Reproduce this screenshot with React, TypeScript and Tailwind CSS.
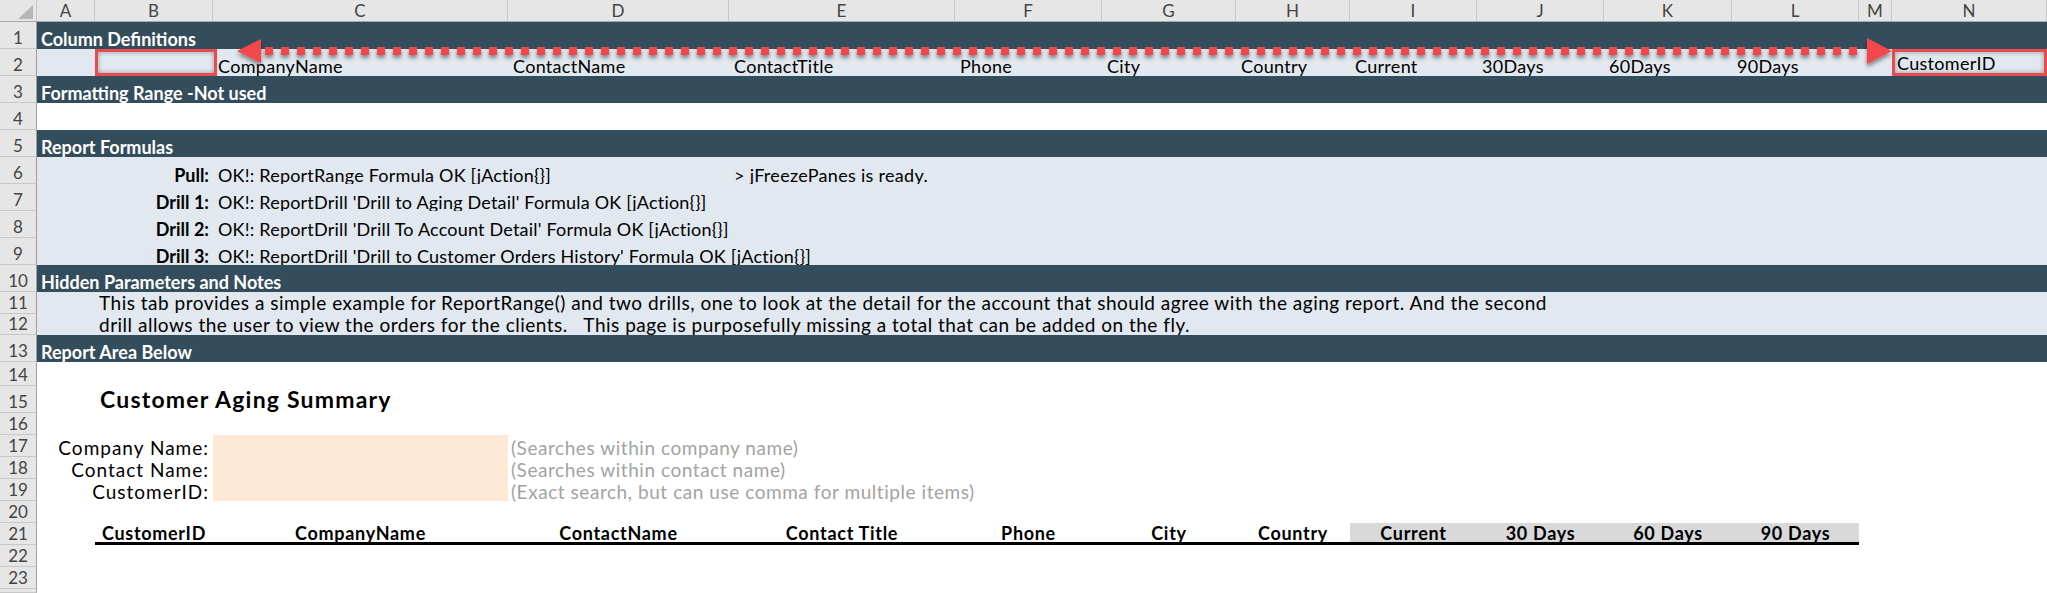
import React from "react";

const COLS =
  "grid grid-cols-[58px_118px_295px_221px_226px_147px_134px_114px_127px_127px_128px_127px_33px_155px]";

const letters = [
  ["A", "w-[58px]"],
  ["B", "w-[118px]"],
  ["C", "w-[295px]"],
  ["D", "w-[221px]"],
  ["E", "w-[226px]"],
  ["F", "w-[147px]"],
  ["G", "w-[134px]"],
  ["H", "w-[114px]"],
  ["I", "w-[127px]"],
  ["J", "w-[127px]"],
  ["K", "w-[128px]"],
  ["L", "w-[127px]"],
  ["M", "w-[33px]"],
  ["N", "w-[155px]"],
];

function Row({
  n,
  h,
  className = "",
  children,
}: {
  n?: number;
  h: string;
  className?: string;
  children?: React.ReactNode;
}) {
  return (
    <div className={`flex ${h}`}>
      <div className="w-[37px] shrink-0 bg-[#e6e6e6] border-r border-r-[#9e9e9e] border-b border-b-[#c8c8c8] flex items-end justify-center text-[17px] leading-[21px] text-[#444]">
        {n}
      </div>
      <div className={`flex-1 min-w-0 ${className}`}>{children}</div>
    </div>
  );
}

function Band({ n, title }: { n: number; title: string }) {
  return (
    <Row n={n} h="h-[27px]" className="bg-[#344d5c] flex items-end pl-[4px]">
      <span className="text-white font-bold text-[18px] leading-[20px] whitespace-nowrap">{title}</span>
    </Row>
  );
}

const defs = [
  "",
  "",
  "CompanyName",
  "ContactName",
  "ContactTitle",
  "Phone",
  "City",
  "Country",
  "Current",
  "30Days",
  "60Days",
  "90Days",
  "",
  "CustomerID",
];

const formulas = [
  ["Pull:", "OK!: ReportRange Formula OK [jAction{}]"],
  ["Drill 1:", "OK!: ReportDrill 'Drill to Aging Detail' Formula OK [jAction{}]"],
  ["Drill 2:", "OK!: ReportDrill 'Drill To Account Detail' Formula OK [jAction{}]"],
  ["Drill 3:", "OK!: ReportDrill 'Drill to Customer Orders History' Formula OK [jAction{}]"],
];

const filters = [
  ["Company Name:", "(Searches within company name)"],
  ["Contact Name:", "(Searches within contact name)"],
  ["CustomerID:", "(Exact search, but can use comma for multiple items)"],
];

const heads = [
  "CustomerID",
  "CompanyName",
  "ContactName",
  "Contact Title",
  "Phone",
  "City",
  "Country",
  "Current",
  "30 Days",
  "60 Days",
  "90 Days",
];

function Arrow() {
  const dots = [];
  for (let x = 265; x < 1862; x += 16) dots.push(x);
  return (
    <svg className="absolute left-0 top-0 pointer-events-none" width="2047" height="593">
      <defs>
        <filter id="sh" x="-5%" y="-100%" width="110%" height="300%">
          <feDropShadow dx="0" dy="3" stdDeviation="2" floodColor="#000" floodOpacity="0.45" />
        </filter>
      </defs>
      <g filter="url(#sh)" fill="#f4474b">
        {dots.map((x) => (
          <rect key={x} x={x} y={47} width={8} height={8} />
        ))}
        <polygon points="237,51 261,39 261,63" />
        <polygon points="1892,51 1867,38 1867,64" />
      </g>
    </svg>
  );
}

export default function App() {
  return (
    <div className="relative w-[2047px] h-[593px] overflow-hidden bg-white font-['Lato',sans-serif] text-[18px] text-black">
      {/* column letters */}
      <div className="flex h-[22px] bg-[#e6e6e6] border-b border-[#a8a8a8]">
        <div className="w-[37px] shrink-0 border-r border-[#c8c8c8] relative">
          <svg className="absolute left-[18px] top-[5px]" width="15" height="14">
            <polygon points="15,0 15,14 0,14" fill="#b6b6b6" />
          </svg>
        </div>
        {letters.map(([l, w]) => (
          <div
            key={l}
            className={`${w} shrink-0 border-r border-[#c8c8c8] flex items-center justify-center text-[17px] text-[#444]`}
          >
            {l}
          </div>
        ))}
      </div>

      <Band n={1} title="Column Definitions" />
      <Row n={2} h="h-[27px]" className={`${COLS} bg-[#e1e8ef]`}>
        {defs.map((d, i) => (
          <div
            key={i}
            className={`flex items-end whitespace-nowrap leading-[20px] tracking-[0.3px] ${
              i === 1
                ? "-mr-[4px] border-[3px] border-[#ea4b4f] shadow-[inset_0_0_5px_rgba(0,0,0,0.35)]"
                : i === 13
                ? "border-[3px] border-[#ea4b4f] shadow-[inset_0_0_5px_rgba(0,0,0,0.35)] pl-[2px]"
                : "pl-[5px]"
            }`}
          >
            {d}
          </div>
        ))}
      </Row>
      <Band n={3} title="Formatting Range -Not used" />
      <Row n={4} h="h-[27px]" className="bg-white" />
      <Band n={5} title="Report Formulas" />
      {formulas.map(([label, text], i) => (
        <Row key={label} n={6 + i} h="h-[27px]" className={`${COLS} bg-[#e1e8ef]`}>
          <div className="col-span-2 flex items-end justify-end pr-[4px] font-bold leading-[18px]">
            {label}
          </div>
          <div className="col-span-2 flex items-end pl-[5px] whitespace-nowrap leading-[18px] tracking-[0.2px]">
            {text}
          </div>
          {i === 0 && (
            <div className="col-span-2 flex items-end pl-[5px] whitespace-nowrap leading-[18px] tracking-[0.3px]">
              &gt; jFreezePanes is ready.
            </div>
          )}
        </Row>
      ))}
      <Band n={10} title="Hidden Parameters and Notes" />
      <Row
        n={11}
        h="h-[22px]"
        className="bg-[#e1e8ef] flex items-end pl-[62px] pb-[1px] whitespace-nowrap text-[19px] leading-[21px] tracking-[0.5px]"
      >
        This tab provides a simple example for ReportRange() and two drills, one to look at the detail for the account that should agree with the aging report. And the second
      </Row>
      <Row
        n={12}
        h="h-[21px]"
        className="bg-[#e1e8ef] flex items-end pl-[62px] whitespace-nowrap text-[19px] leading-[21px] tracking-[0.5px]"
      >
        drill allows the user to view the orders for the clients.&nbsp;&nbsp; This page is purposefully missing a total that can be added on the fly.
      </Row>
      <Band n={13} title="Report Area Below" />
      <Row n={14} h="h-[24px]" />
      <Row n={15} h="h-[27px]" className="flex items-end pl-[63px] pb-[1px]">
        <span className="font-bold text-[23px] leading-[26px] tracking-[1.2px] whitespace-nowrap">
          Customer Aging Summary
        </span>
      </Row>
      <Row n={16} h="h-[22px]" />
      {filters.map(([label, hint], i) => (
        <Row key={label} n={17 + i} h="h-[22px]" className={COLS}>
          <div className="col-span-2 flex items-end justify-end pr-[4px] text-[19px] leading-[19px] tracking-[1px] whitespace-nowrap">
            {label}
          </div>
          <div className="bg-[#fde9d5]" />
          <div className="col-span-3 flex items-end pl-[3px] text-[19px] leading-[19px] tracking-[0.55px] whitespace-nowrap text-[#a3a3a3]">
            {hint}
          </div>
        </Row>
      ))}
      <Row n={20} h="h-[22px]" />
      <Row n={21} h="h-[22px]" className={COLS}>
        <div />
        {heads.map((t, i) => (
          <div
            key={t}
            className={`flex items-end justify-center border-b-[3px] border-black font-bold leading-[17px] tracking-[0.7px] whitespace-nowrap ${
              i >= 7 ? "bg-[#d9d9d9]" : ""
            }`}
          >
            {t}
          </div>
        ))}
      </Row>
      <Row n={22} h="h-[22px]" />
      <Row n={23} h="h-[22px]" />
      <Row h="h-[4px]" />

      <Arrow />
    </div>
  );
}
